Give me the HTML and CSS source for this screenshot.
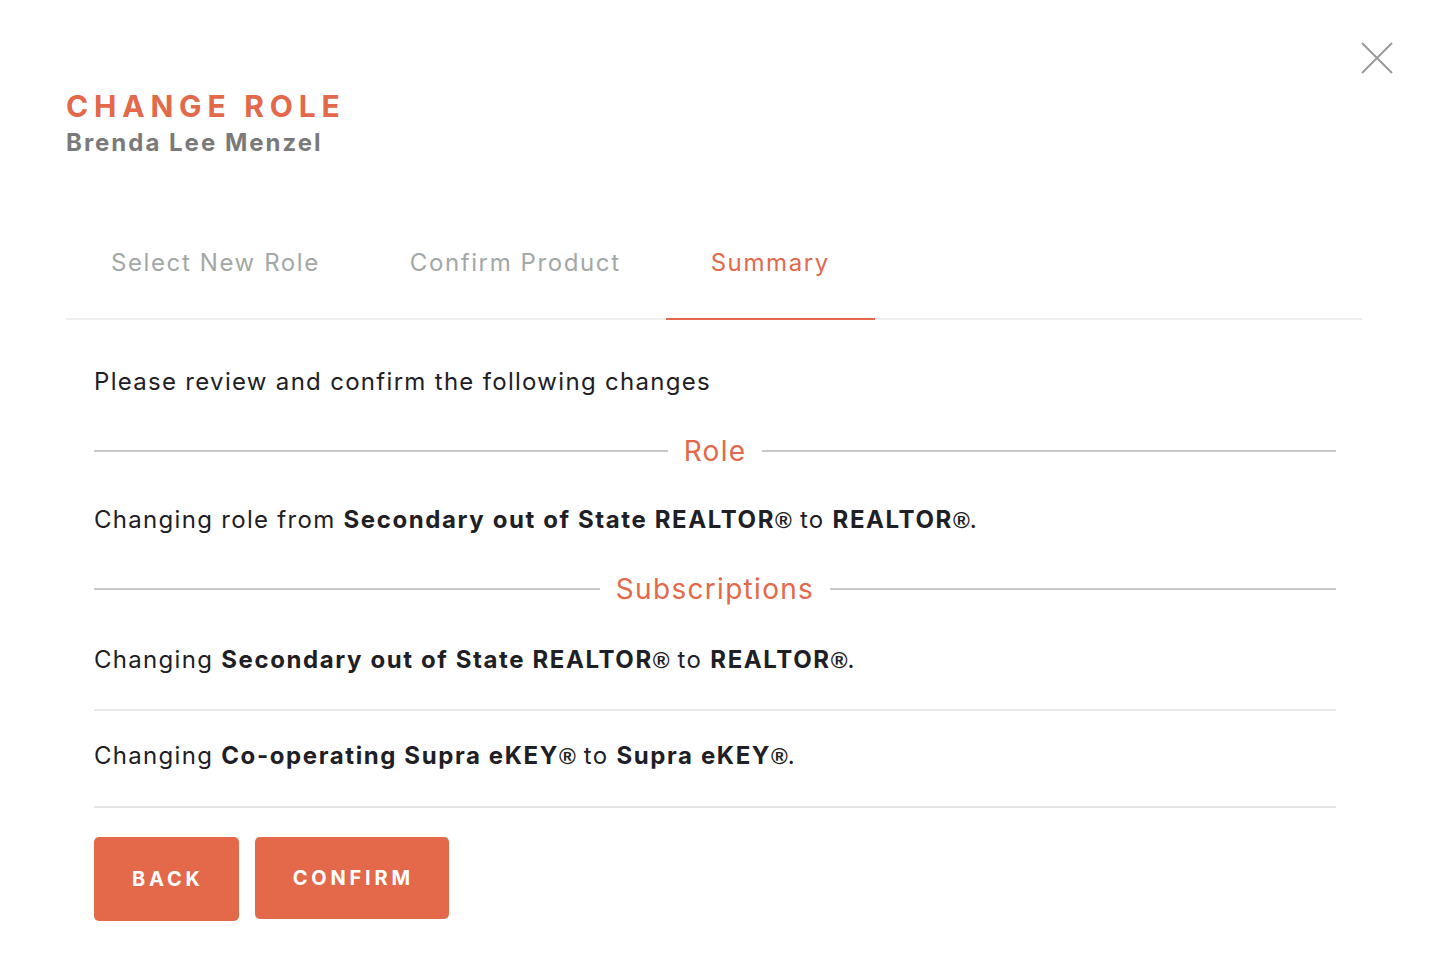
FILE: index.html
```html
<!DOCTYPE html>
<html lang="en">
<head>
    <meta charset="UTF-8">
    <meta name="viewport" content="width=device-width, initial-scale=1.0">
    <title>Change Role</title>
    <link rel="stylesheet" href="styles.css">
</head>
<body>
    <div class="modal">
        <button class="close" aria-label="Close">
            <svg width="32" height="32" viewBox="0 0 32 32">
                <path d="M1 1 L31 31 M31 1 L1 31" stroke="#9b9b9b" stroke-width="2" fill="none"/>
            </svg>
        </button>

        <h1 class="title">CHANGE ROLE</h1>
        <div class="subtitle">Brenda Lee Menzel</div>

        <div class="tabs">
            <div class="tab">Select New Role</div>
            <div class="tab">Confirm Product</div>
            <div class="tab active">Summary</div>
        </div>

        <div class="content">
            <p class="intro">Please review and confirm the following changes</p>

            <div class="section-title"><span>Role</span></div>
            <p class="change">Changing role from <b>Secondary out of State REALTOR<span class="reg">®</span></b> to <b>REALTOR<span class="reg">®</span></b>.</p>

            <div class="section-title"><span>Subscriptions</span></div>
            <div class="rows">
                <div class="row">Changing <b>Secondary out of State REALTOR<span class="reg">®</span></b> to <b>REALTOR<span class="reg">®</span></b>.</div>
                <div class="row">Changing <b>Co-operating Supra eKEY<span class="reg">®</span></b> to <b>Supra eKEY<span class="reg">®</span></b>.</div>
            </div>

            <div class="actions">
                <button class="btn btn-back">BACK</button>
                <button class="btn btn-confirm">CONFIRM</button>
            </div>
        </div>
    </div>
</body>
</html>
```

FILE: styles.css
```css
body {
    margin: 0;
    background-color: #fff;
    font-family: Inter, "Open Sans", sans-serif;
    color: #1e2025;
}

.modal {
    position: relative;
    padding: 88px 68px 40px 66px;
}

.close {
    position: absolute;
    top: 42px;
    left: 1361px;
    width: 32px;
    height: 32px;
    padding: 0;
    border: none;
    background: none;
    cursor: pointer;
}

.title {
    margin: 0;
    font-size: 30px;
    line-height: 36px;
    font-weight: 700;
    letter-spacing: 5.8px;
    color: #e4684a;
}

.subtitle {
    margin-top: 4px;
    font-size: 24px;
    line-height: 30px;
    font-weight: 700;
    letter-spacing: 2px;
    color: #7a7a7a;
}

.tabs {
    display: flex;
    margin-top: 70px;
    border-bottom: 2px solid #eeeeee;
}

.tab {
    padding: 20px 45px 40px;
    font-size: 24px;
    line-height: 30px;
    letter-spacing: 1.6px;
    color: #a2a8a6;
    border-bottom: 2px solid transparent;
    margin-bottom: -2px;
}

.tab.active {
    color: #e4684a;
    border-bottom-color: #e4684a;
}

.content {
    padding: 0 26px 0 28px;
    font-size: 24px;
    line-height: 30px;
    letter-spacing: 1.3px;
}

.intro {
    margin: 47px 0 0;
}

.section-title {
    display: flex;
    align-items: center;
    gap: 16px;
    margin-top: 39px;
    font-size: 28px;
    line-height: 30px;
    letter-spacing: 1.3px;
    color: #e4684a;
}

.section-title::before,
.section-title::after {
    content: "";
    flex: 1;
    height: 2px;
    background-color: #c9c9c9;
}

.change {
    margin: 39px 0 0;
}

.section-title + .rows {
    margin-top: 11px;
}

.row {
    padding: 30px 0 34px;
    border-bottom: 2px solid #e6e6e6;
}

.row + .row {
    padding-bottom: 35px;
}

b {
    font-weight: 700;
    letter-spacing: 1.6px;
}

.reg {
    font-family: "Liberation Sans", sans-serif;
    font-size: 0.95em;
    letter-spacing: 0;
}

.actions {
    display: flex;
    align-items: flex-start;
    gap: 16px;
    margin-top: 29px;
}

.btn {
    height: 82px;
    padding: 0 35px 0 38px;
    border: none;
    border-radius: 5px;
    background-color: #e4684a;
    color: #fff;
    font-family: inherit;
    font-size: 20px;
    font-weight: 700;
    letter-spacing: 3.8px;
    cursor: pointer;
}

.btn-back {
    height: 84px;
}
```
